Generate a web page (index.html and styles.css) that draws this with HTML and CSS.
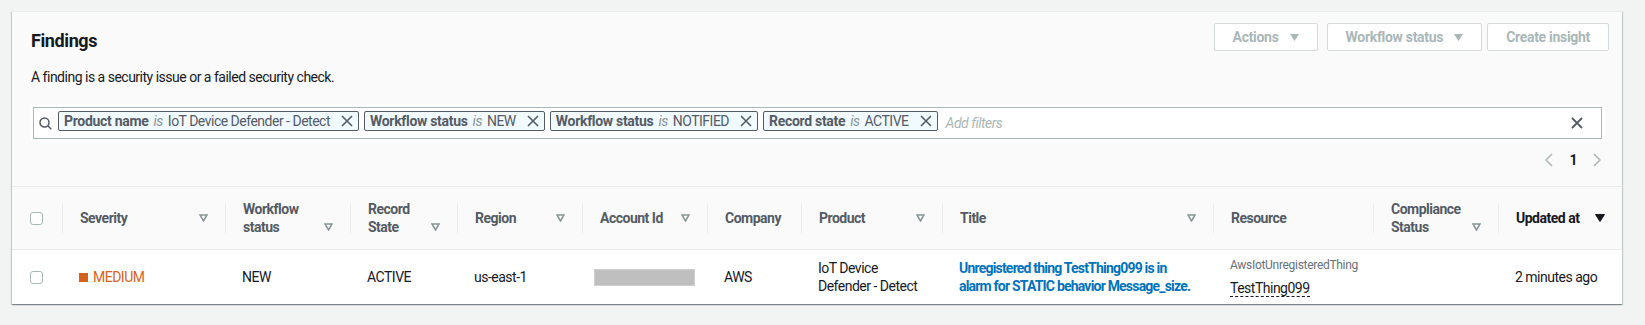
FILE: index.html
```html
<!DOCTYPE html>
<html>
<head>
<meta charset="utf-8">
<title>Findings</title>
<link rel="stylesheet" href="styles.css">
</head>
<body>
<div class="panel">
  <div class="head">
    <div class="top">
      <h2 class="ttl">Findings</h2>
      <div class="btns">
        <button class="btn btn-act">Actions <svg class="caret" width="9" height="7" viewBox="0 0 9 7"><path d="M0 0H9L4.5 7Z"/></svg></button>
        <button class="btn">Workflow status <svg class="caret" width="9" height="7" viewBox="0 0 9 7"><path d="M0 0H9L4.5 7Z"/></svg></button>
        <button class="btn">Create insight</button>
      </div>
    </div>
    <p class="desc">A finding is a security issue or a failed security check.</p>

    <div class="filter">
      <div class="fbox">
        <svg class="srch" width="13" height="13" viewBox="0 0 13 13"><circle cx="5.5" cy="5.5" r="4.5"/><path d="M8.8 8.8L12.3 12.3"/></svg>
        <span class="tok"><b>Product name</b><i>is</i><span>IoT Device Defender - Detect</span><svg class="x" width="12" height="12" viewBox="0 0 12 12"><path d="M1 1L11 11M11 1L1 11"/></svg></span>
        <span class="tok"><b>Workflow status</b><i>is</i><span>NEW</span><svg class="x" width="12" height="12" viewBox="0 0 12 12"><path d="M1 1L11 11M11 1L1 11"/></svg></span>
        <span class="tok"><b>Workflow status</b><i>is</i><span>NOTIFIED</span><svg class="x" width="12" height="12" viewBox="0 0 12 12"><path d="M1 1L11 11M11 1L1 11"/></svg></span>
        <span class="tok"><b>Record state</b><i>is</i><span>ACTIVE</span><svg class="x" width="12" height="12" viewBox="0 0 12 12"><path d="M1 1L11 11M11 1L1 11"/></svg></span>
        <span class="ph">Add filters</span>
        <svg class="clr" width="12" height="12" viewBox="0 0 12 12"><path d="M1 1L11 11M11 1L1 11"/></svg>
      </div>
    </div>

    <div class="pager">
      <svg class="chev" width="8" height="14" viewBox="0 0 8 14"><path d="M7 1L1 7L7 13"/></svg>
      <span>1</span>
      <svg class="chev" width="8" height="14" viewBox="0 0 8 14"><path d="M1 1L7 7L1 13"/></svg>
    </div>
  </div>

  <table class="grid">
    <colgroup>
      <col class="c0"><col class="c1"><col class="c2"><col class="c3"><col class="c4"><col class="c5">
      <col class="c6"><col class="c7"><col class="c8"><col class="c9"><col class="c10"><col class="c11">
    </colgroup>
    <thead>
      <tr>
        <th class="chk"><span class="cb"></span></th>
        <th><div class="th"><span>Severity</span><svg class="sort" width="9" height="8" viewBox="0 0 9 8"><path d="M1 1H8L4.5 7Z"/></svg></div></th>
        <th><div class="th"><span>Workflow<br>status</span><svg class="sort" width="9" height="8" viewBox="0 0 9 8"><path d="M1 1H8L4.5 7Z"/></svg></div></th>
        <th><div class="th"><span>Record<br>State</span><svg class="sort" width="9" height="8" viewBox="0 0 9 8"><path d="M1 1H8L4.5 7Z"/></svg></div></th>
        <th><div class="th"><span>Region</span><svg class="sort" width="9" height="8" viewBox="0 0 9 8"><path d="M1 1H8L4.5 7Z"/></svg></div></th>
        <th><div class="th"><span>Account Id</span><svg class="sort" width="9" height="8" viewBox="0 0 9 8"><path d="M1 1H8L4.5 7Z"/></svg></div></th>
        <th><div class="th"><span>Company</span></div></th>
        <th><div class="th"><span>Product</span><svg class="sort" width="9" height="8" viewBox="0 0 9 8"><path d="M1 1H8L4.5 7Z"/></svg></div></th>
        <th><div class="th"><span>Title</span><svg class="sort" width="9" height="8" viewBox="0 0 9 8"><path d="M1 1H8L4.5 7Z"/></svg></div></th>
        <th><div class="th"><span>Resource</span></div></th>
        <th><div class="th"><span>Compliance<br>Status</span><svg class="sort" width="9" height="8" viewBox="0 0 9 8"><path d="M1 1H8L4.5 7Z"/></svg></div></th>
        <th class="on"><div class="th"><span>Updated at</span><svg class="sort" width="10" height="8" viewBox="0 0 10 8"><path d="M0.5 0.5H9.5L5 7.5Z"/></svg></div></th>
      </tr>
    </thead>
    <tbody>
      <tr>
        <td class="chk"><span class="cb"></span></td>
        <td><span class="sev"><span class="sq"></span>MEDIUM</span></td>
        <td>NEW</td>
        <td>ACTIVE</td>
        <td>us-east-1</td>
        <td class="acct"><span class="redact"></span></td>
        <td>AWS</td>
        <td>IoT Device<br>Defender - Detect</td>
        <td><a class="lnk" href="#">Unregistered thing TestThing099 is in<br>alarm for STATIC behavior Message_size.</a></td>
        <td><div class="rtype">AwsIotUnregisteredThing</div><div class="rid"><span>TestThing099</span></div></td>
        <td></td>
        <td>2 minutes ago</td>
      </tr>
    </tbody>
  </table>
</div>
</body>
</html>
```

FILE: styles.css
```css
body { margin: 0; background: #f2f3f3; font-family: Roboto, "Liberation Sans", sans-serif; font-size: 14px; letter-spacing: -0.5px; color: #16191f; }

.panel { margin: 11px 23px 20px 12px; background: #fafafa; border-top: 1px solid #eaeded;
  box-shadow: 0 1px 1px 0 rgba(0,28,36,.3), 1px 1px 1px 0 rgba(0,28,36,.15), -1px 1px 1px 0 rgba(0,28,36,.15); }

.head { padding: 11px 13px 15px 19px; }
.top { display: flex; justify-content: space-between; align-items: flex-start; }
.ttl { margin: 7px 0 0; font-size: 18px; line-height: 22px; font-weight: 700; letter-spacing: -0.4px; }
.btns { display: flex; gap: 5px; }
.btn { display: flex; align-items: center; height: 28px; box-sizing: border-box; padding: 0 18px;
  border: 1px solid #d5dbdb; border-radius: 2px; background: #fff; color: #aab7b8;
  font: 700 14px Roboto, "Liberation Sans", sans-serif; letter-spacing: -0.3px; white-space: nowrap; }
.btn-act { margin-right: 4px; }
.caret { margin-left: 11px; fill: #aab7b8; }

.desc { margin: 15px 0 0; line-height: 20px; }

.filter { margin: 17px 4px 0 -1px; padding: 3px; background: #fff; }
.fbox { display: flex; align-items: center; height: 32px; box-sizing: border-box; padding: 0 18px 0 5px; border: 1px solid #aab7b8; }
.srch { fill: none; stroke: #545b64; stroke-width: 1.5; flex: none; }
.tok { display: inline-flex; align-items: center; gap: 5px; height: 20px; box-sizing: border-box; margin: 0 0 4px 5px;
  padding: 0 5px; border: 1px solid #545b64; border-radius: 2px; background: #f1faff; color: #545b64;
  line-height: 18px; white-space: nowrap; }
.tok:first-of-type { margin-left: 6px; }
.tok b { font-weight: 700; letter-spacing: -0.3px; }
.tok i { color: #879596; }
.x { margin-left: 6px; fill: none; stroke: #545b64; stroke-width: 1.6; }
.ph { margin-left: 8px; color: #aab7b8; font-style: italic; }
.clr { margin-left: auto; fill: none; stroke: #545b64; stroke-width: 1.8; }

.pager { display: flex; justify-content: flex-end; align-items: center; gap: 16px; height: 22px; margin: 7px 8px 0 0; font-weight: 700; }
.chev { fill: none; stroke: #aab7b8; stroke-width: 1.5; }

.grid { width: 100%; table-layout: fixed; border-collapse: separate; border-spacing: 0; border-top: 1px solid #eaeded; }
.c0 { width: 50px; } .c1 { width: 163px; } .c2 { width: 125px; } .c3 { width: 107px; }
.c4 { width: 125px; } .c5 { width: 125px; } .c6 { width: 94px; } .c7 { width: 141px; }
.c8 { width: 271px; } .c9 { width: 160px; } .c10 { width: 125px; } .c11 { width: 124px; }

.grid th { height: 62px; padding: 0 17px 0 18px; border-bottom: 1px solid #eaeded; text-align: left; color: #545b64;
  font-weight: 700; line-height: 18px; white-space: nowrap;
  background: linear-gradient(#eaeded, #eaeded) left center / 1px 29px no-repeat; }
.grid th.chk { background: none; }
.grid th.on { color: #16191f; }
.th { display: flex; justify-content: space-between; align-items: flex-end; }
.sort { flex: none; margin-bottom: 5px; fill: none; stroke: #879596; stroke-width: 1.5; }
.on .sort { fill: #16191f; stroke: #16191f; stroke-width: 1; }

.grid td { height: 54px; padding: 0 17px; background: #fff; line-height: 18px; vertical-align: middle; white-space: nowrap; }
.grid .chk { padding: 0 0 0 18px; }
.cb { display: block; width: 13px; height: 13px; box-sizing: border-box; border: 1px solid #aab7b8; border-radius: 3px; background: #fff; }

.sev { display: flex; align-items: center; gap: 5px; color: #d5631d; }
.sq { width: 9px; height: 9px; background: #d5631d; }
.grid td.acct { padding-left: 12px; }
.redact { display: block; width: 101px; height: 17px; box-sizing: border-box; background: #bfbfbf; border: 1px solid #d0d0d0; }
.lnk { color: #0073bb; font-weight: 700; letter-spacing: -0.8px; text-decoration: none; }
.rtype { font-size: 12px; line-height: 16px; letter-spacing: -0.3px; color: #687078; }
.rid { margin-top: 6px; }
.rid span { border-bottom: 1px dashed #16191f; }
```
